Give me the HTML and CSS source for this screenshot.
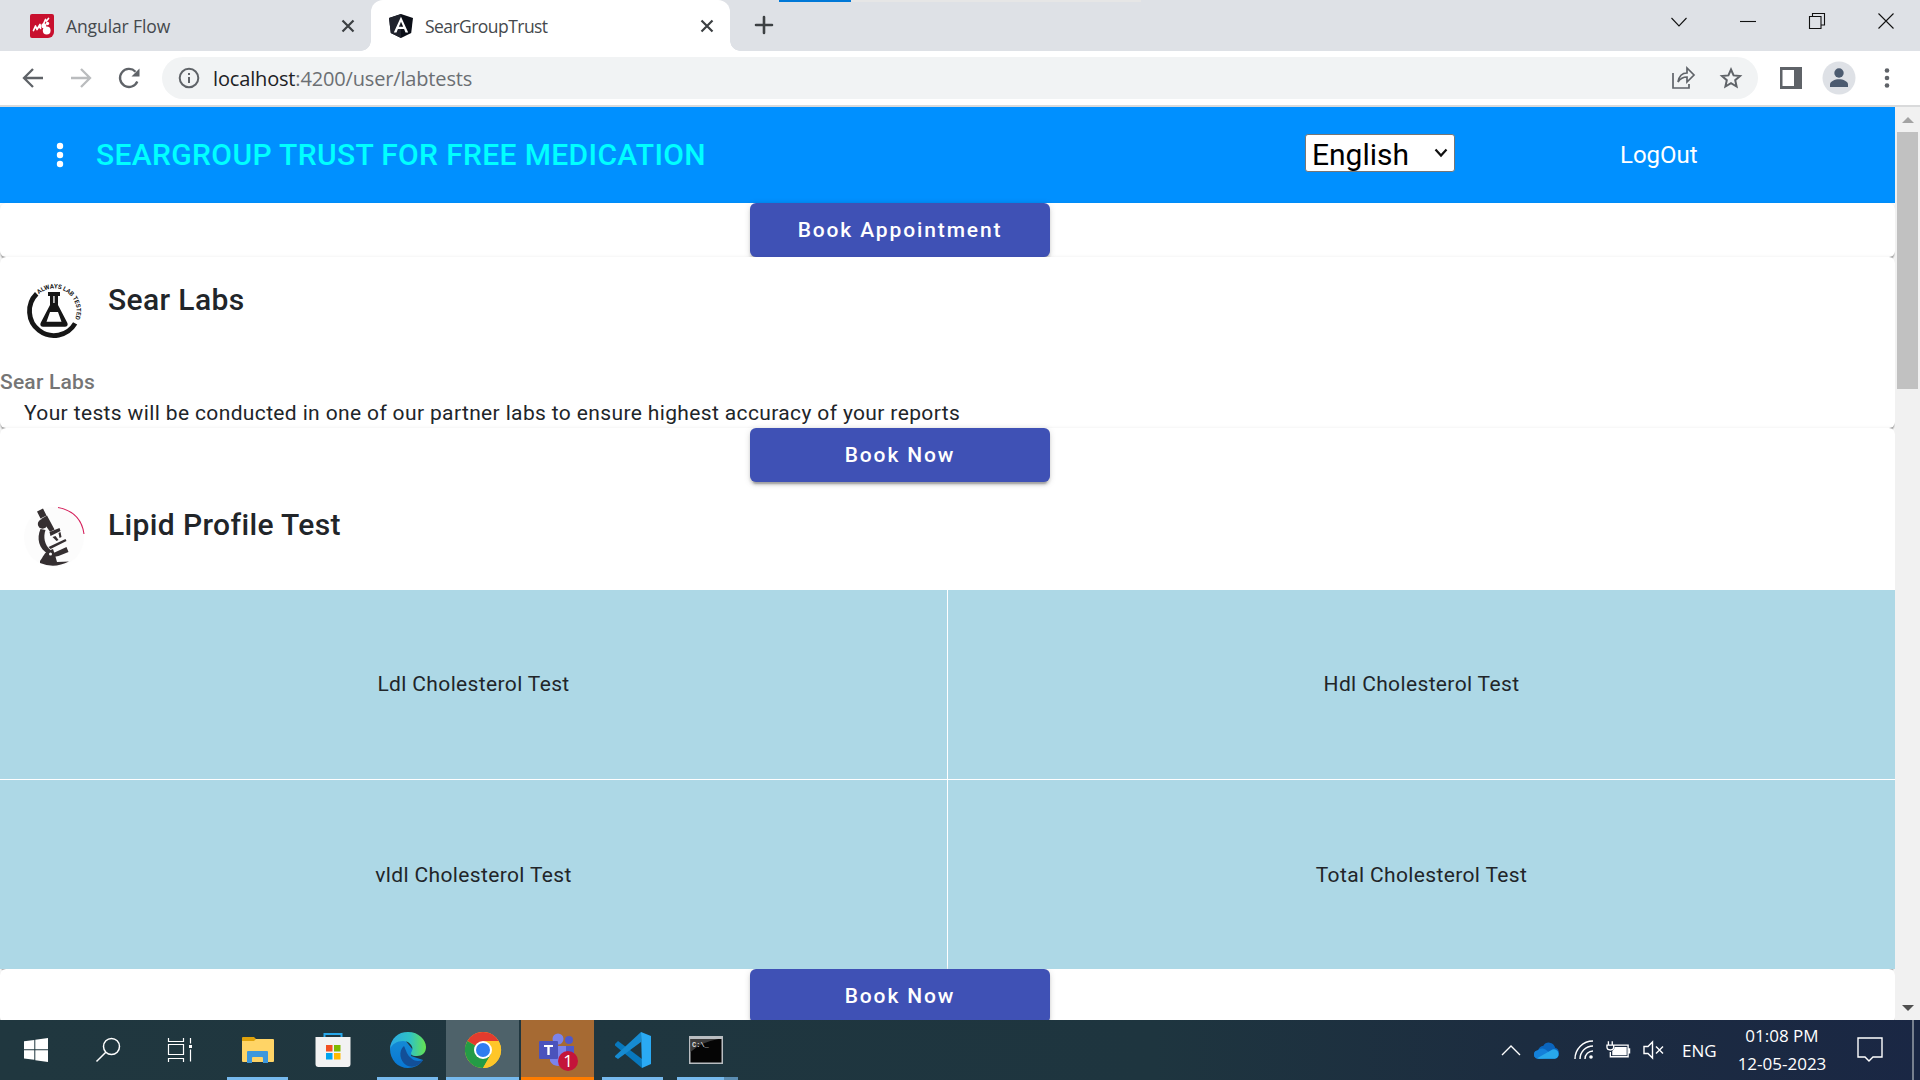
FILE: index.html
```html
<!DOCTYPE html>
<html lang="en">
<head>
<meta charset="utf-8">
<title>SearGroupTrust</title>
<link rel="stylesheet" href="styles.css">
</head>
<body>
<div class="screen">
  <div class="tabstrip">
    <div class="top-progress"><i></i></div>
    <div class="tab">
      <svg class="favicon" viewBox="0 0 24 24"><path d="M2 0h20a2 2 0 0 1 2 2v16a6 6 0 0 1-6 6H2a2 2 0 0 1-2-2V2a2 2 0 0 1 2-2z" fill="#c8102e"/><path d="M3.500 16.500l2-4.500 1.500 3.500 3-5 .5 4M13.500 10l2-4.500M16.500 7l2-2.500" stroke="#fff" stroke-width="1.700" fill="none" stroke-linecap="round" stroke-linejoin="round"/><circle cx="16.700" cy="16.500" r="3.900" fill="#fff"/><circle cx="13.800" cy="11.800" r="2.500" fill="#fff"/><circle cx="17.500" cy="9.500" r="1.700" fill="#fff"/></svg>
      <span class="tab-title">Angular Flow</span>
      <svg class="tab-close" viewBox="0 0 14 14"><path d="M1.500 1.500l11 11M12.500 1.500l-11 11"/></svg>
    </div>
    <div class="tab active">
      <svg class="favicon" viewBox="0 0 24 24"><path d="M12 0l12 4-1.800 15L12 24 1.800 19 0 4z" fill="#0b0e17"/><path d="M12 0v24L1.800 19 0 4z" fill="#20232d"/><path d="M12 2.800L4.800 18.500h2.700l1.400-3.600h6.200l1.400 3.600h2.700zM12 7.800l2.200 5H9.800z" fill="#fff" fill-rule="evenodd"/></svg>
      <span class="tab-title">SearGroupTrust</span>
      <svg class="tab-close" viewBox="0 0 14 14"><path d="M1.500 1.500l11 11M12.500 1.500l-11 11"/></svg>
    </div>
    <svg class="new-tab" viewBox="0 0 20 20"><path d="M10 2v16M2 10h16"/></svg>
    <div class="window-controls">
      <svg viewBox="0 0 16 16"><path d="M.5 5L8 13l7.500-8"/></svg>
      <svg viewBox="0 0 16 16"><path d="M0 8.500h16"/></svg>
      <svg viewBox="0 0 16 16"><path d="M.5 3.500h11.500v12H.5zM3.500 3.500v-3h12v11.500h-3"/></svg>
      <svg viewBox="0 0 16 16"><path d="M.5.5l15 15M15.500.5l-15 15"/></svg>
    </div>
  </div>

  <div class="toolbar">
    <svg class="nav" viewBox="0 0 24 24"><path d="M22 12H3M12 3l-9 9 9 9"/></svg>
    <svg class="nav disabled" viewBox="0 0 24 24"><path d="M2 12h19M12 3l9 9-9 9"/></svg>
    <svg class="nav" viewBox="0 0 24 24"><path d="M20.300 15.500A9 9 0 1 1 18.500 5.700"/><path d="M22.500 2.500v8h-8z" class="solid"/></svg>
    <div class="omnibox">
      <svg class="info" viewBox="0 0 22 22"><circle cx="11" cy="11" r="9.300"/><path d="M11 10v6M11 6v2"/></svg>
      <span class="url"><b>localhost</b>:4200/user/labtests</span>
      <svg class="share" viewBox="0 0 24 24"><path d="M2 7v15h16v-4M7 16c1-6 4-9 9-9V2l7 7-7 7v-5c-4 0-7 2-9 5z"/></svg>
      <svg class="star" viewBox="0 0 24 24"><path d="M12 3.500l2.600 5.900 6.400.6-4.800 4.200 1.400 6.300L12 17.200l-5.600 3.300 1.400-6.300L3 10l6.400-.6z"/></svg>
    </div>
    <svg class="panel" viewBox="0 0 22 22"><path d="M0 0h22v22H0zM2.500 3v16H14V3z" fill-rule="evenodd"/></svg>
    <svg class="account" viewBox="0 0 34 34"><circle cx="17" cy="17" r="16.500" fill="#dee1e6"/><circle cx="17" cy="12" r="4.700" fill="#4c5b70"/><path d="M8 26v-2.500c0-3.200 5-5.200 9-5.200s9 2 9 5.200V26z" fill="#4c5b70"/></svg>
    <svg class="more" viewBox="0 0 6 22"><circle cx="3" cy="3.500" r="2.300"/><circle cx="3" cy="11" r="2.300"/><circle cx="3" cy="18.500" r="2.300"/></svg>
  </div>

  <div class="viewport">
    <main class="page">
      <header class="app-bar">
        <svg class="menu-dots" viewBox="0 0 8 26"><circle cx="4" cy="4" r="3.200"/><circle cx="4" cy="13" r="3.200"/><circle cx="4" cy="22" r="3.200"/></svg>
        <h1 class="brand">SEARGROUP TRUST FOR FREE MEDICATION</h1>
        <div class="language">English<svg viewBox="0 0 14 10"><path d="M1.500 1.500L7 7.500l5.500-6"/></svg></div>
        <a class="logout">LogOut</a>
      </header>

      <section class="card"><button class="book">Book Appointment</button></section>

      <section class="card">
        <div class="card-header">
          <svg class="avatar" viewBox="0 0 60 60">
            <defs><path id="ring" d="M14.940 13.280A22.500 22.500 0 0 1 49.900 40.560"/></defs>
            <path d="M12.680 12.680A24.500 24.500 0 1 0 51.130 42.400" fill="none" stroke="#161616" stroke-width="4.800"/>
            <text class="ring-text" textLength="60"><textPath href="#ring">ALWAYS LAB TESTED</textPath></text>
            <path d="M24 11h12v4h-2v9l9.400 18c.8 2.200-.3 3.800-2.500 3.800H19.100c-2.200 0-3.300-1.600-2.500-3.800L26 24v-9h-2zM26 31l-3.500 9.800h15L34 31zM29.300 15v7h1.300v-7z" fill="#161616" fill-rule="evenodd"/>
          </svg>
          <h2 class="card-title">Sear Labs</h2>
        </div>
        <h3 class="card-subtitle">Sear Labs</h3>
        <p class="card-text">Your tests will be conducted in one of our partner labs to ensure highest accuracy of your reports</p>
      </section>

      <section class="card">
        <button class="book">Book Now</button>
        <div class="card-header">
          <svg class="avatar" viewBox="0 0 60 60">
            <circle cx="30" cy="31" r="30" fill="#fcfcfc"/>
            <path d="M34 1.500Q57 6 60 28" fill="none" stroke="#d5215c" stroke-width="1.100"/>
            <g fill="#352f31" transform="translate(.5 1)">
              <path d="M12.500 4.500l6-3 3.500 7-6 3zM16.500 12l6-3.500 7.500 14-4.500 2.200z"/><circle cx="18" cy="17" r="4.700"/>
              <path d="M16 22l5 1c-2.500 7-1 15 5 20l-2 4C14 42 12 31 16 22zM25 25l10-4 1 3-10 5zM28 30l3-1 3 4-2 1zM34 26l2-1 1 5-2 1zM24 40l17-8 1 2-16 8zM29 46l13-6 2 5-10 4-5 1z"/>
              <path d="M15.500 54c3-4 5-9 8-10l5-2 2 6 2 7 12-.5Q30 62 15.500 56z"/>
            </g>
            <circle cx="26.500" cy="48" r="1.500" fill="#fff"/>
          </svg>
          <h2 class="card-title">Lipid Profile Test</h2>
        </div>
        <div class="tests">
          <div class="first-row">Ldl Cholesterol Test</div><div class="first-row">Hdl Cholesterol Test</div>
          <div>vldl Cholesterol Test</div><div>Total Cholesterol Test</div>
        </div>
      </section>
      <section class="card"><button class="book">Book Now</button></section>
    </main>
    <div class="scrollbar"><i class="up"></i><div class="thumb"></div><i class="down"></i></div>
  </div>

  <div class="taskbar">
    <div class="sys"><svg width="24" height="24" viewBox="0 0 24 24" fill="#fff"><path d="M0 3.300L10.300 2v9.300H0zM11.300 1.800L24 0v11.300H11.300zM0 12.300h10.300v9.500L0 20.500zM11.300 12.300H24V24l-12.700-1.800z"/></svg></div>
    <div class="sys"><svg width="24" height="24" viewBox="0 0 24 24" fill="none" stroke="#fff" stroke-width="1.500"><circle cx="15.500" cy="8.500" r="8"/><path d="M9.800 14.200L.5 23.500"/></svg></div>
    <div class="sys"><svg width="24" height="24" viewBox="0 0 24 24" fill="none" stroke="#fff" stroke-width="1.200"><path d="M.5 0v3.500h15V0M.5 6.500h15v10H.5zM.5 24v-3.500h15V24M22.500 0v5.500M22.500 11.500v12"/><path d="M21 7h3v3h-3z" fill="#fff" stroke="none"/></svg></div>
    <div class="apps">
      <div class="app run"><svg width="36" height="36" viewBox="0 0 36 36"><path d="M2 6q0-1 1-1h11l2 2v5H2z" fill="#dfa20b"/><path d="M2 9h12l2-2h17q1 0 1 1v21q0 1-1 1H3q-1 0-1-1z" fill="#ffd466"/><path d="M7 31V20q0-1 1-1h19q1 0 1 1v11h-5v-5q0-1-1-1h-9q-1 0-1 1v5z" fill="#3d97dc"/></svg></div>
      <div class="app"><svg width="36" height="36" viewBox="0 0 36 36"><path d="M9.500 7V2h17v5" fill="none" stroke="#28a8ea" stroke-width="2"/><path d="M.5 5h35v27q0 3-3 3h-29q-3 0-3-3z" fill="#f2f2f2"/><path d="M11 13h6.500v6.500H11z" fill="#f25022"/><path d="M19 13h6.500v6.500H19z" fill="#7fba00"/><path d="M11 21h6.500v6.500H11z" fill="#00a4ef"/><path d="M19 21h6.500v6.500H19z" fill="#ffb900"/></svg></div>
      <div class="app run"><svg width="36" height="36" viewBox="0 0 36 36"><defs><linearGradient id="sea"><stop stop-color="#2aa8e5"/><stop offset=".55" stop-color="#2fc2c5"/><stop offset="1" stop-color="#66e34f"/></linearGradient><linearGradient id="deep" x2="0" y2="1"><stop stop-color="#168cd5"/><stop offset="1" stop-color="#0877d4"/></linearGradient></defs><path d="M0 17C1 7 8 3 15 8l8 10-2 6 12 4c-3 5-9 8-15 8C8 36 0 28 0 17z" fill="url(#deep)"/><path d="M0 17C1 6 8 0 18 0c11 0 18 8 18 15 0 6-4 9-9 9-6 0-7-2-5-5 2-5-3-10-9-10C7 9 2 12 0 17z" fill="url(#sea)"/><path d="M14 14c-6 5-4 15 2 19 7 4 14 0 17-5-5 2-9 1-12-2-4-3-5-8-7-12z" fill="#124f98"/></svg></div>
      <div class="app active"><svg width="36" height="36" viewBox="0 0 36 36"><circle cx="18" cy="18" r="18" fill="#ffc629"/><path d="M18 18L2.400 9A18 18 0 0 1 33.600 9z" fill="#e33b2e"/><path d="M2.400 9A18 18 0 0 0 18 36l7.800-13.500L18 18z" fill="#249b46"/><path d="M18 9h15.600A18 18 0 0 1 18 36l7.800-13.500z" fill="#ffc629"/><circle cx="18" cy="18" r="9" fill="#fff"/><circle cx="18" cy="18" r="7" fill="#2f7df0"/></svg></div>
      <div class="app alert"><svg width="40" height="40" viewBox="0 0 40 40"><circle cx="20" cy="8" r="5.500" fill="#7b83eb"/><circle cx="31" cy="9" r="4" fill="#5059c9"/><path d="M26 15h10v12q-3 5-10 3z" fill="#5059c9"/><path d="M12 15h16v15a9 9 0 0 1-16 0z" fill="#7b83eb"/><path d="M2 10h17q1 0 1 1v16q0 1-1 1H2q-1 0-1-1V11q0-1 1-1z" fill="#4b53bc"/><path d="M6 14h9v2h-3.300v8H9.300v-8H6z" fill="#fff"/></svg><span class="badge">1</span></div>
      <div class="app run"><svg width="36" height="36" viewBox="0 0 36 36"><path d="M0 12l3-3 24 18v9L0 13.500z" fill="#0878bd"/><path d="M0 24L26 0v10L3 27l-3-2z" fill="#168bd1"/><path d="M26 0l10 4v28l-9 4z" fill="#2aaaf4"/></svg></div>
      <div class="app run split"><svg width="34" height="28" viewBox="0 0 34 28"><path d="M0 0h34v28H0z" fill="#b9bdc1"/><path d="M1.500 3h31v23.500h-31z" fill="#050505"/><path d="M1.500 3h28Q12 6 1.500 16z" fill="#3b3b3b"/><text x="3" y="10.500" class="prompt">C:\_</text></svg></div>
    </div>
    <div class="tray">
      <svg class="chev" viewBox="0 0 20 12"><path d="M1 11l9-9 9 9"/></svg>
      <svg class="cloud" viewBox="0 0 24 16"><path d="M4 8q1-4 5-4.500Q11 0 15 .5t5.500 5Q24 6 24 11q0 4-4 5H5q-5 0-5-4t4-4z" fill="#0b65bd"/><path d="M3 8q4-3 8-1l9 7-15 2q-5-.5-5-4t3-4z" fill="#1480d8"/><path d="M3 15.500L16 8q4-3 7 1 2 6-3 7H5z" fill="#28a8ea"/></svg>
      <svg class="wifi" viewBox="0 0 20 20"><path d="M1 19A18 18 0 0 1 19 1M6 19A13 13 0 0 1 19 6M11 19a8 8 0 0 1 8-8"/><circle cx="17" cy="17" r="1.800" fill="#fff" stroke="none"/></svg>
      <svg class="batt" viewBox="0 0 26 18"><path d="M7 4h16v12H4.500V11M23 8h1.500v4H23M2.500 0v4M6.500 0v4M1 4h7v2q0 3-3.500 3T1 6z"/><path d="M9 6h12.500v8.500H6.500V10Q9 9 9 6z" fill="#fff" stroke="none"/></svg>
      <svg class="mute" viewBox="0 0 22 20"><path d="M1 6.500h4L9.500 2v16L5 13.500H1zM13 6.500l7 7M20 6.500l-7 7"/></svg>
      <span class="lang">ENG</span>
      <div class="clock"><span>01:08 PM</span><span>12-05-2023</span></div>
      <svg class="note" viewBox="0 0 26 26"><path d="M1 1h24v19H16l-4 4-4-4H1z"/></svg>
      <i class="peek"></i>
    </div>
  </div>
</div>
</body>
</html>
```
FILE: styles.css
```css
* { box-sizing: border-box; margin: 0; padding: 0; }
body { width: 1920px; height: 1080px; overflow: hidden; background: #fff; font-family: Roboto, sans-serif; }
svg { display: block; flex: none; overflow: visible; }
.screen { display: flex; flex-direction: column; height: 1080px; }

.tabstrip { position: relative; display: flex; height: 51px; flex: none; background: #dee1e6; font-family: "Open Sans", "Noto Sans", sans-serif; }
.top-progress { position: absolute; left: 779px; top: 0; width: 362px; height: 2px; background: #e6e6e6; }
.top-progress i { display: block; width: 72px; height: 2px; background: #0078d7; }
.tab { position: relative; display: flex; align-items: center; width: 371px; padding: 0 16px 0 30px; }
.tab.active { width: 359px; padding-left: 18px; background: #fff; border-radius: 12px 12px 0 0; }
.tab.active::before, .tab.active::after { content: ""; position: absolute; bottom: 0; width: 10px; height: 10px; }
.tab.active::before { left: -10px; background: radial-gradient(circle at 0 0, transparent 9.5px, #fff 10px); }
.tab.active::after { right: -10px; background: radial-gradient(circle at 100% 0, transparent 9.5px, #fff 10px); }
.favicon { width: 24px; height: 24px; }
.tab-title { margin-left: 12px; font-size: 17.5px; line-height: 24px; letter-spacing: -.1px; color: #45494d; white-space: nowrap; }
.tab.active .tab-title { letter-spacing: -.55px; }
.tab-close { width: 14px; height: 14px; margin-left: auto; fill: none; stroke: #3c4043; stroke-width: 2.2; }
.new-tab { width: 20px; height: 20px; margin: 15px 0 0 24px; fill: none; stroke: #3c4043; stroke-width: 2.6; stroke-linecap: round; }
.window-controls { display: flex; gap: 53px; margin: 13px 26px 0 auto; }
.window-controls svg { width: 16px; height: 16px; fill: none; stroke: #111; stroke-width: 1.1; }

.toolbar { display: flex; align-items: center; height: 56px; flex: none; padding-left: 21px; border-bottom: 2px solid #d9dadb; background: #fff; }
.nav { width: 24px; height: 24px; margin-right: 24px; fill: none; stroke: #5f6368; stroke-width: 2.3; }
.nav.disabled { stroke: #babcbe; }
.nav .solid { fill: #5f6368; stroke: none; }
.omnibox { display: flex; align-items: center; width: 1596px; height: 42px; margin-left: -3px; padding: 0 15px 0 16px; border-radius: 21px; background: #f1f3f4; }
.info { width: 22px; height: 22px; fill: none; stroke: #5f6368; stroke-width: 2; }
.url { margin-left: 13px; padding-top: 2px; font: 20px/28px "Open Sans", "Noto Sans", sans-serif; letter-spacing: -.16px; color: #6b6f73; white-space: nowrap; }
.url b { font-weight: 400; color: #202124; }
.share { width: 24px; height: 24px; margin-left: auto; fill: none; stroke: #5f6368; stroke-width: 1.7; }
.star { width: 24px; height: 24px; margin-left: 24px; fill: none; stroke: #5f6368; stroke-width: 2; }
.panel { width: 22px; height: 22px; margin-left: 22px; fill: #5f6368; }
.account { width: 34px; height: 34px; margin-left: 20px; }
.more { width: 6px; height: 22px; margin-left: 28px; fill: #5f6368; }

.viewport { display: flex; flex: 1; min-height: 0; }
.page { width: 1895px; overflow: hidden; color: #212529; }
.app-bar { display: flex; align-items: center; height: 96px; padding-left: 56px; background: #0090ff; }
.menu-dots { width: 8px; height: 26px; fill: #fff; }
.brand { width: 1209px; margin-left: 32px; font-size: 30px; font-weight: 500; line-height: 48px; letter-spacing: .36px; color: #0ff; white-space: nowrap; }
.language { display: flex; align-items: center; justify-content: space-between; width: 150px; height: 38px; margin-top: -4px; padding: 3px 6px 0; border: 1px solid #767676; border-radius: 3px; background: #fff; color: #000; font-size: 30px; line-height: 34px; }
.language svg { width: 14px; height: 10px; margin-top: -4px; fill: none; stroke: #111; stroke-width: 2.2; }
.logout { margin-left: 165px; color: #fff; font-size: 24px; line-height: 36px; }

.card { border-radius: 6px; box-shadow: 0 3px 1.5px -1.5px rgba(0, 0, 0, .2), 0 1.5px 1.5px rgba(0, 0, 0, .14), 0 1.5px 4.5px rgba(0, 0, 0, .12); background: #fff; }
.book { display: block; width: 300px; height: 54px; margin: 0 0 0 750px; border: 0; border-radius: 6px; background: #3f51b5; box-shadow: 0 4.5px 1.5px -3px rgba(0, 0, 0, .2), 0 3px 3px rgba(0, 0, 0, .14), 0 1.5px 7.5px rgba(0, 0, 0, .12); color: #fff; font: 500 21px/54px Roboto, sans-serif; letter-spacing: 1.87px; text-align: center; }
.card-header { display: flex; height: 108px; padding: 24px; }
.avatar { width: 60px; height: 60px; }
.ring-text { font: 700 6.2px Roboto, sans-serif; fill: #161616; }
.card-title { margin-left: 24px; font-size: 30px; font-weight: 500; line-height: 38px; letter-spacing: .375px; }
.card-subtitle { padding-top: 2px; height: 33px; font-size: 21px; font-weight: 500; line-height: 31px; letter-spacing: .2px; color: #757575; }
.card-text { height: 30px; padding-left: 24px; font-size: 21px; line-height: 30px; letter-spacing: .365px; white-space: nowrap; }
.tests { display: grid; grid-template-columns: 947px 947px; grid-template-rows: 189px 189px; gap: 1px; }
.tests div { display: flex; align-items: center; justify-content: center; background: #add8e6; font-size: 21px; letter-spacing: .365px; }
.tests .first-row { padding-bottom: 2px; }

.scrollbar { display: flex; flex-direction: column; align-items: center; width: 25px; background: #f1f1f1; }
.thumb { width: 21px; height: 257px; background: #c1c1c1; }
.up { border: 6px solid transparent; border-bottom: 6px solid #a3a3a3; border-top: 0; margin: 10px 0 9px; }
.down { border: 6px solid transparent; border-top: 6px solid #505050; border-bottom: 0; margin: auto 0 9px; }

.taskbar { display: flex; height: 60px; flex: none; background: linear-gradient(90deg, #20373f, #1e353f 60%, #1c2c40 80%, #1a2744); color: #fff; font-family: "Open Sans", "Noto Sans", sans-serif; }
.sys { display: flex; align-items: center; justify-content: center; width: 72px; }
.apps { display: flex; margin-left: 5px; gap: 2px; }
.app { position: relative; display: flex; align-items: center; justify-content: center; width: 73px; }
.app.run::after { content: ""; position: absolute; left: 6px; bottom: 0; width: 61px; height: 3px; background: #76b9ed; }
.app.split { padding-right: 3px; }
.app.split::after { background: linear-gradient(90deg, #76b9ed 47px, #5b8db2 47px); }
.app.active { background: #4e626a; border-bottom: 3px solid #76b9ed; padding-top: 3px; }
.app.alert { background: #a66a33; border-bottom: 3px solid #ff7c00; padding-top: 5px; }
.badge { position: absolute; left: 37px; top: 31px; width: 20px; height: 20px; border-radius: 50%; background: #c4143a; font-size: 17px; line-height: 20px; text-align: center; }
.prompt { font: 700 7px "Liberation Mono", monospace; fill: #ddd; }
.tray { display: flex; align-items: center; margin-left: auto; }
.tray svg { fill: none; stroke: #fff; stroke-width: 1.4; }
.tray .chev { width: 20px; height: 12px; margin-right: 13px; }
.tray .cloud { width: 25px; height: 17px; stroke: none; margin-right: 15px; }
.wifi { width: 20px; height: 20px; margin-right: 12px; }
.batt { width: 25px; height: 18px; margin-right: 12px; }
.mute { width: 22px; height: 20px; margin-right: 17px; }
.lang { width: 34px; font-size: 17px; }
.clock { display: flex; flex-direction: column; width: 96px; margin: 0 27px 0 18px; font-size: 17px; line-height: 28px; text-align: center; white-space: nowrap; }
.note { width: 26px; height: 26px; margin-right: 29px; }
.peek { width: 2px; height: 60px; margin-right: 6px; background: #77808f; }
```
